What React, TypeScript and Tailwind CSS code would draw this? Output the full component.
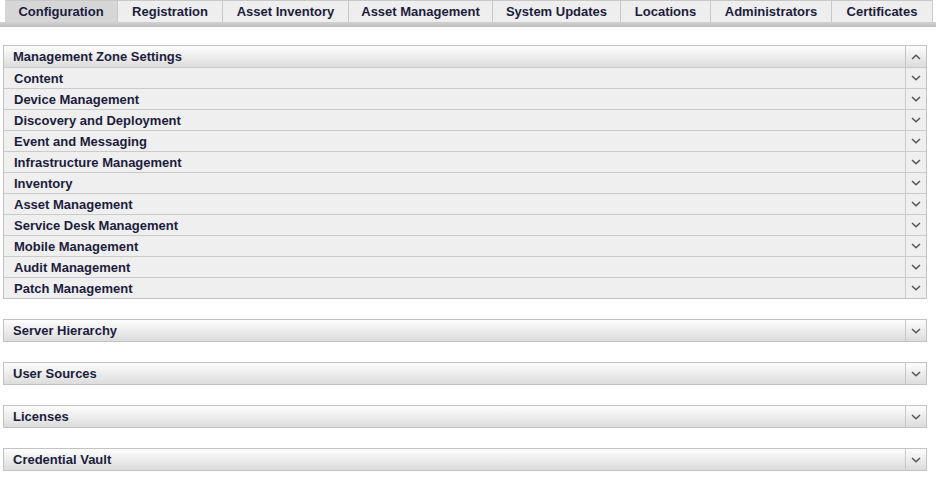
import React from 'react';

const tabs = [
  { label: 'Configuration', w: 'w-[112px]' },
  { label: 'Registration', w: 'w-[105px]' },
  { label: 'Asset Inventory', w: 'w-[126px]' },
  { label: 'Asset Management', w: 'w-[144px]' },
  { label: 'System Updates', w: 'w-[128px]' },
  { label: 'Locations', w: 'w-[90px]' },
  { label: 'Administrators', w: 'w-[121px]' },
  { label: 'Certificates', w: 'w-[102px]' },
];

const zoneRows = [
  'Content',
  'Device Management',
  'Discovery and Deployment',
  'Event and Messaging',
  'Infrastructure Management',
  'Inventory',
  'Asset Management',
  'Service Desk Management',
  'Mobile Management',
  'Audit Management',
  'Patch Management',
];

const sections = ['Server Hierarchy', 'User Sources', 'Licenses', 'Credential Vault'];

function Chevron({ up }: { up?: boolean }) {
  return (
    <svg width="10" height="6" viewBox="0 0 10 6" className="block">
      <path
        d={up ? 'M1 5 L5 1.2 L9 5' : 'M1 1 L5 4.8 L9 1'}
        fill="none"
        stroke="#555"
        strokeWidth="1.5"
      />
    </svg>
  );
}

function Header({ title, up }: { title: string; up?: boolean }) {
  return (
    <div className="flex h-[21px] items-stretch bg-gradient-to-b from-[#fdfdfd] to-[#dcdcdc]">
      <div className="flex flex-1 items-center pl-[9px]">{title}</div>
      <div className="flex w-[21px] items-center justify-center border-l border-[#c6c6c6]">
        <Chevron up={up} />
      </div>
    </div>
  );
}

export default function App() {
  return (
    <div className="h-[483px] w-[936px] bg-white text-[13px] font-bold text-[#1c1c3c]" style={{ fontFamily: '"Liberation Sans", Arial, sans-serif' }}>
      <div className="flex h-[22px] pl-[5px]">
        {tabs.map((t, i) => (
          <div
            key={t.label}
            className={`${t.w} flex items-center justify-center border-t border-[#c8c8c8] ${i > 0 ? 'border-l' : ''} ${i === tabs.length - 1 ? 'border-r' : ''} ${i === 0 ? 'bg-[#d6d6d6]' : 'bg-[#eeeeee]'}`}
          >
            {t.label}
          </div>
        ))}
      </div>
      <div className="h-[5px] bg-gradient-to-b from-[#d2d2d2] to-[#bdbdbd]" />

      <div className="mt-[18px] ml-[3px] w-[924px] border border-[#c2c2c2]">
        <Header title="Management Zone Settings" up />
        {zoneRows.map((r) => (
          <div key={r} className="flex h-[21px] items-stretch border-t border-[#cacaca] bg-[#efefef]">
            <div className="flex flex-1 items-center pl-[10px] pt-px">{r}</div>
            <div className="flex w-[21px] items-center justify-center border-l border-[#cacaca]">
              <Chevron />
            </div>
          </div>
        ))}
      </div>

      {sections.map((s) => (
        <div key={s} className="mt-[20px] ml-[3px] w-[924px] border border-[#c2c2c2]">
          <Header title={s} />
        </div>
      ))}
    </div>
  );
}
